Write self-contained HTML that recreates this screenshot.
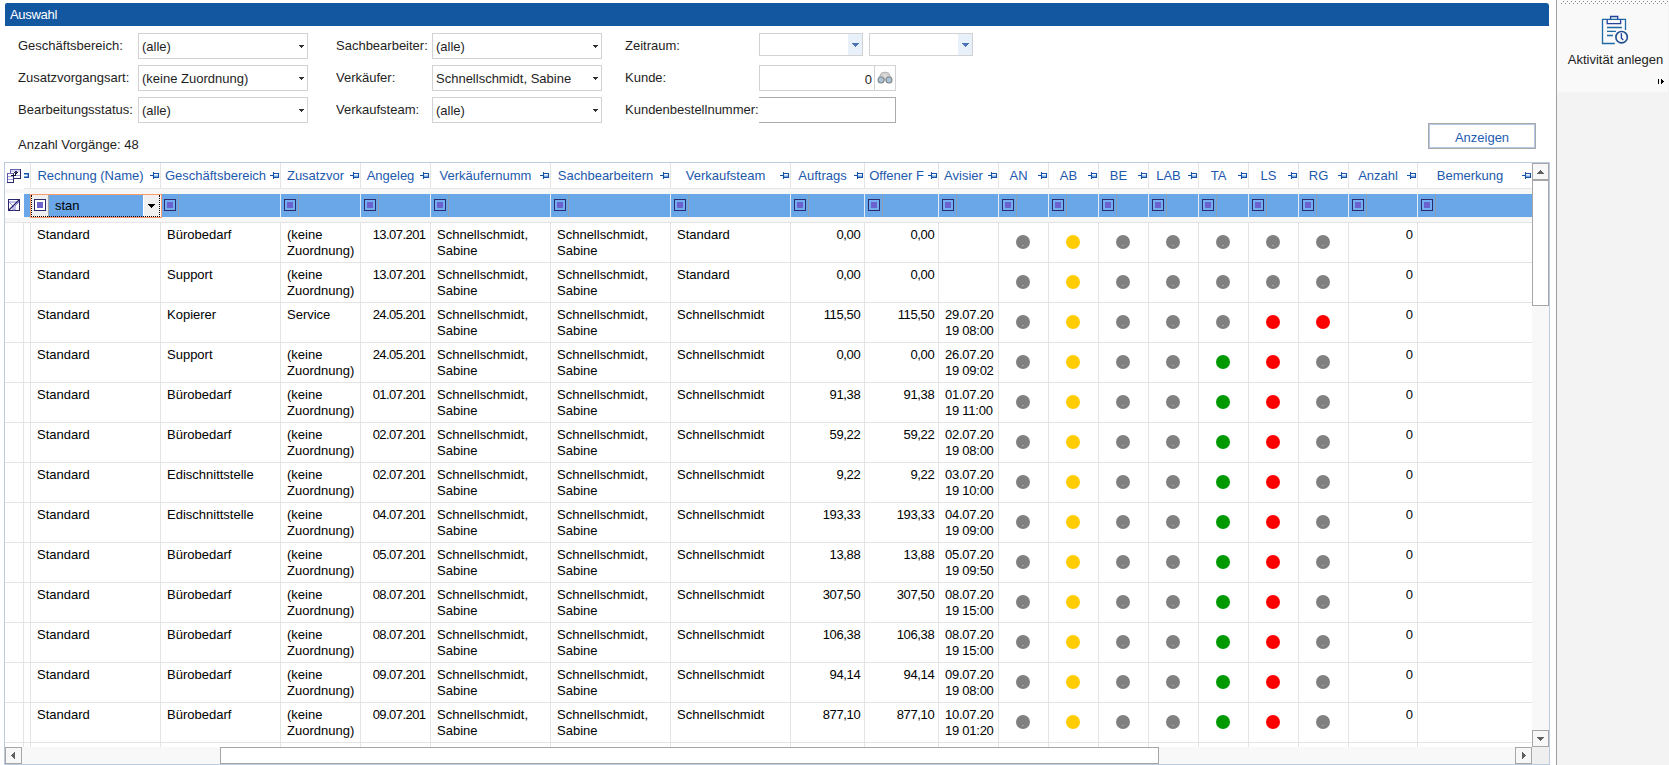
<!DOCTYPE html><html><head><meta charset="utf-8"><style>
*{margin:0;padding:0;box-sizing:border-box}
html,body{width:1669px;height:765px;overflow:hidden;background:#fff;font-family:"Liberation Sans",sans-serif;font-size:13px}
.a{position:absolute}
.t{position:absolute;white-space:nowrap;line-height:16px;font-size:13px}
.cb{position:absolute;border:1px solid #d2d2d2;background:#fff}
.arr{position:absolute;width:0;height:0;border-left:2.5px solid transparent;border-right:2.5px solid transparent;border-top:3px solid #333}
.hl{position:absolute;background:#e4e4e4}
.dot{position:absolute;width:14px;height:14px;border-radius:50%}
.fi{position:absolute;width:12px;height:12px;border:1px solid #2b2a6b;background:#72aef0}
.fi i{position:absolute;left:2px;top:2px;width:6px;height:6px;background:#6b62cf}
.sep{position:absolute;width:1px;background:#8e9fb3}
.pin{position:absolute;width:10px;height:8px}
.sbtn{position:absolute;border:1px solid #a6a6a6;background:#f7f7f7}
</style></head><body>

<div class="a" style="left:5px;top:3px;width:1544px;height:23px;background:#1357a0;border-top-right-radius:3px;border-top-left-radius:2px"></div>
<div class="t" style="left:10px;top:7px;color:#fff;letter-spacing:-0.3px">Auswahl</div>
<div class="t" style="left:18px;top:38px;color:#1e1e1e;">Geschäftsbereich:</div>
<div class="t" style="left:18px;top:70px;color:#1e1e1e;">Zusatzvorgangsart:</div>
<div class="t" style="left:18px;top:102px;color:#1e1e1e;">Bearbeitungsstatus:</div>
<div class="t" style="left:336px;top:38px;color:#1e1e1e;">Sachbearbeiter:</div>
<div class="t" style="left:336px;top:70px;color:#1e1e1e;">Verkäufer:</div>
<div class="t" style="left:336px;top:102px;color:#1e1e1e;">Verkaufsteam:</div>
<div class="t" style="left:625px;top:38px;color:#1e1e1e;">Zeitraum:</div>
<div class="t" style="left:625px;top:70px;color:#1e1e1e;">Kunde:</div>
<div class="t" style="left:625px;top:102px;color:#1e1e1e;">Kundenbestellnummer:</div>
<div class="t" style="left:18px;top:137px;color:#1e1e1e;">Anzahl Vorgänge: 48</div>
<div class="cb" style="left:138px;top:33px;width:170px;height:26px"></div>
<div class="t" style="left:142px;top:39px;color:#1e1e1e;">(alle)</div>
<div class="a" style="left:299px;top:45px;width:5px;height:1px;background:#333"></div><div class="a" style="left:300px;top:46px;width:3px;height:1px;background:#333"></div><div class="a" style="left:301px;top:47px;width:1px;height:1px;background:#333"></div>
<div class="cb" style="left:138px;top:65px;width:170px;height:26px"></div>
<div class="t" style="left:142px;top:71px;color:#1e1e1e;">(keine Zuordnung)</div>
<div class="a" style="left:299px;top:77px;width:5px;height:1px;background:#333"></div><div class="a" style="left:300px;top:78px;width:3px;height:1px;background:#333"></div><div class="a" style="left:301px;top:79px;width:1px;height:1px;background:#333"></div>
<div class="cb" style="left:138px;top:97px;width:170px;height:26px"></div>
<div class="t" style="left:142px;top:103px;color:#1e1e1e;">(alle)</div>
<div class="a" style="left:299px;top:109px;width:5px;height:1px;background:#333"></div><div class="a" style="left:300px;top:110px;width:3px;height:1px;background:#333"></div><div class="a" style="left:301px;top:111px;width:1px;height:1px;background:#333"></div>
<div class="cb" style="left:432px;top:33px;width:170px;height:26px"></div>
<div class="t" style="left:436px;top:39px;color:#1e1e1e;">(alle)</div>
<div class="a" style="left:593px;top:45px;width:5px;height:1px;background:#333"></div><div class="a" style="left:594px;top:46px;width:3px;height:1px;background:#333"></div><div class="a" style="left:595px;top:47px;width:1px;height:1px;background:#333"></div>
<div class="cb" style="left:432px;top:65px;width:170px;height:26px"></div>
<div class="t" style="left:436px;top:71px;color:#1e1e1e;">Schnellschmidt, Sabine</div>
<div class="a" style="left:593px;top:77px;width:5px;height:1px;background:#333"></div><div class="a" style="left:594px;top:78px;width:3px;height:1px;background:#333"></div><div class="a" style="left:595px;top:79px;width:1px;height:1px;background:#333"></div>
<div class="cb" style="left:432px;top:97px;width:170px;height:26px"></div>
<div class="t" style="left:436px;top:103px;color:#1e1e1e;">(alle)</div>
<div class="a" style="left:593px;top:109px;width:5px;height:1px;background:#333"></div><div class="a" style="left:594px;top:110px;width:3px;height:1px;background:#333"></div><div class="a" style="left:595px;top:111px;width:1px;height:1px;background:#333"></div>
<div class="cb" style="left:759px;top:33px;width:104px;height:23px"></div>
<div class="a" style="left:848px;top:34px;width:14px;height:21px;background:#e8f0fa"></div>
<div class="a" style="left:852px;top:43px;width:7px;height:1px;background:#4a74b4"></div><div class="a" style="left:853px;top:44px;width:5px;height:1px;background:#4a74b4"></div><div class="a" style="left:854px;top:45px;width:3px;height:1px;background:#4a74b4"></div><div class="a" style="left:855px;top:46px;width:1px;height:1px;background:#4a74b4"></div>
<div class="cb" style="left:869px;top:33px;width:104px;height:23px"></div>
<div class="a" style="left:958px;top:34px;width:14px;height:21px;background:#e8f0fa"></div>
<div class="a" style="left:962px;top:43px;width:7px;height:1px;background:#4a74b4"></div><div class="a" style="left:963px;top:44px;width:5px;height:1px;background:#4a74b4"></div><div class="a" style="left:964px;top:45px;width:3px;height:1px;background:#4a74b4"></div><div class="a" style="left:965px;top:46px;width:1px;height:1px;background:#4a74b4"></div>
<div class="cb" style="left:759px;top:65px;width:137px;height:26px"></div>
<div class="a" style="left:874px;top:66px;width:1px;height:24px;background:#d2d2d2"></div>
<div class="t" style="left:759px;width:113px;text-align:right;top:72px;color:#1e1e1e">0</div>
<svg class="a" style="left:877px;top:70px" width="16" height="14" viewBox="0 0 16 14">
<path d="M1.2 10 L4 3.5 Q5 2.3 6.5 2.6 Q8 1.6 9.5 2.6 Q11 2.3 12 3.5 L14.8 10 Z" fill="#cfcfcf" stroke="#a3a3a3" stroke-width="0.8"/>
<path d="M7 4 V8 M9 4 V8" stroke="#e8e8e8" stroke-width="0.8"/>
<circle cx="4.1" cy="10" r="3" fill="#a9c3da" stroke="#858585" stroke-width="1.1"/>
<circle cx="12" cy="10" r="3" fill="#a9c3da" stroke="#858585" stroke-width="1.1"/>
</svg>
<div class="a" style="left:759px;top:97px;width:137px;height:26px;border:1px solid #ababab;border-left:none;background:#fff"></div>
<div class="a" style="left:1428px;top:123px;width:108px;height:26px;border:1px solid #a8a8a8;background:#fff"><div class="a" style="left:0;top:0;right:0;bottom:0;border:1px solid #b4cbe8"></div></div>
<div class="t" style="left:1428px;width:108px;text-align:center;top:130px;color:#1e5cb3">Anzeigen</div>
<div class="a" style="left:1556px;top:0;width:1px;height:765px;background:#a0a0a0"></div>
<div class="a" style="left:1557px;top:0;width:112px;height:765px;background:#f3f3f3"></div>
<div class="a" style="left:1557px;top:0;width:111px;height:92px;background:#f9f9f9"></div>
<div class="a" style="left:1563px;top:1px;width:1px;height:1px;background:#8a8a8a"></div><div class="a" style="left:1561px;top:3px;width:1px;height:1px;background:#8a8a8a"></div><div class="a" style="left:1567px;top:1px;width:1px;height:1px;background:#8a8a8a"></div><div class="a" style="left:1565px;top:3px;width:1px;height:1px;background:#8a8a8a"></div><div class="a" style="left:1571px;top:1px;width:1px;height:1px;background:#8a8a8a"></div><div class="a" style="left:1569px;top:3px;width:1px;height:1px;background:#8a8a8a"></div><div class="a" style="left:1575px;top:1px;width:1px;height:1px;background:#8a8a8a"></div><div class="a" style="left:1573px;top:3px;width:1px;height:1px;background:#8a8a8a"></div><div class="a" style="left:1579px;top:1px;width:1px;height:1px;background:#8a8a8a"></div><div class="a" style="left:1577px;top:3px;width:1px;height:1px;background:#8a8a8a"></div><div class="a" style="left:1583px;top:1px;width:1px;height:1px;background:#8a8a8a"></div><div class="a" style="left:1581px;top:3px;width:1px;height:1px;background:#8a8a8a"></div><div class="a" style="left:1587px;top:1px;width:1px;height:1px;background:#8a8a8a"></div><div class="a" style="left:1585px;top:3px;width:1px;height:1px;background:#8a8a8a"></div><div class="a" style="left:1591px;top:1px;width:1px;height:1px;background:#8a8a8a"></div><div class="a" style="left:1589px;top:3px;width:1px;height:1px;background:#8a8a8a"></div><div class="a" style="left:1595px;top:1px;width:1px;height:1px;background:#8a8a8a"></div><div class="a" style="left:1593px;top:3px;width:1px;height:1px;background:#8a8a8a"></div><div class="a" style="left:1599px;top:1px;width:1px;height:1px;background:#8a8a8a"></div><div class="a" style="left:1597px;top:3px;width:1px;height:1px;background:#8a8a8a"></div><div class="a" style="left:1603px;top:1px;width:1px;height:1px;background:#8a8a8a"></div><div class="a" style="left:1601px;top:3px;width:1px;height:1px;background:#8a8a8a"></div><div class="a" style="left:1607px;top:1px;width:1px;height:1px;background:#8a8a8a"></div><div class="a" style="left:1605px;top:3px;width:1px;height:1px;background:#8a8a8a"></div><div class="a" style="left:1611px;top:1px;width:1px;height:1px;background:#8a8a8a"></div><div class="a" style="left:1609px;top:3px;width:1px;height:1px;background:#8a8a8a"></div><div class="a" style="left:1615px;top:1px;width:1px;height:1px;background:#8a8a8a"></div><div class="a" style="left:1613px;top:3px;width:1px;height:1px;background:#8a8a8a"></div><div class="a" style="left:1619px;top:1px;width:1px;height:1px;background:#8a8a8a"></div><div class="a" style="left:1617px;top:3px;width:1px;height:1px;background:#8a8a8a"></div><div class="a" style="left:1623px;top:1px;width:1px;height:1px;background:#8a8a8a"></div><div class="a" style="left:1621px;top:3px;width:1px;height:1px;background:#8a8a8a"></div><div class="a" style="left:1627px;top:1px;width:1px;height:1px;background:#8a8a8a"></div><div class="a" style="left:1625px;top:3px;width:1px;height:1px;background:#8a8a8a"></div><div class="a" style="left:1631px;top:1px;width:1px;height:1px;background:#8a8a8a"></div><div class="a" style="left:1629px;top:3px;width:1px;height:1px;background:#8a8a8a"></div><div class="a" style="left:1635px;top:1px;width:1px;height:1px;background:#8a8a8a"></div><div class="a" style="left:1633px;top:3px;width:1px;height:1px;background:#8a8a8a"></div><div class="a" style="left:1639px;top:1px;width:1px;height:1px;background:#8a8a8a"></div><div class="a" style="left:1637px;top:3px;width:1px;height:1px;background:#8a8a8a"></div><div class="a" style="left:1643px;top:1px;width:1px;height:1px;background:#8a8a8a"></div><div class="a" style="left:1641px;top:3px;width:1px;height:1px;background:#8a8a8a"></div><div class="a" style="left:1647px;top:1px;width:1px;height:1px;background:#8a8a8a"></div><div class="a" style="left:1645px;top:3px;width:1px;height:1px;background:#8a8a8a"></div><div class="a" style="left:1651px;top:1px;width:1px;height:1px;background:#8a8a8a"></div><div class="a" style="left:1649px;top:3px;width:1px;height:1px;background:#8a8a8a"></div><div class="a" style="left:1655px;top:1px;width:1px;height:1px;background:#8a8a8a"></div><div class="a" style="left:1653px;top:3px;width:1px;height:1px;background:#8a8a8a"></div><div class="a" style="left:1659px;top:1px;width:1px;height:1px;background:#8a8a8a"></div><div class="a" style="left:1657px;top:3px;width:1px;height:1px;background:#8a8a8a"></div><div class="a" style="left:1663px;top:1px;width:1px;height:1px;background:#8a8a8a"></div><div class="a" style="left:1661px;top:3px;width:1px;height:1px;background:#8a8a8a"></div><div class="a" style="left:1667px;top:1px;width:1px;height:1px;background:#8a8a8a"></div><div class="a" style="left:1665px;top:3px;width:1px;height:1px;background:#8a8a8a"></div>
<svg class="a" style="left:1596px;top:10px" width="40" height="40" viewBox="0 0 40 40">
<g fill="none" stroke-width="1.3">
<path d="M18.8 33.5 H6.5 V9.4 H29.5 V19.9" stroke="#1f6aa6"/>
<path d="M11.2 9.4 V13.6 H24.6 V9.4" stroke="#21449a"/>
<path d="M14.6 9.4 V6.5 H21.7 V9.4" stroke="#21449a"/>
<path d="M11 17.5 H25.9 M11 21.4 H19.9 M11 25.5 H17" stroke="#1f6aa6"/>
<circle cx="25.6" cy="27.2" r="5.7" stroke="#1d4d92" stroke-width="1.6"/>
<path d="M25.4 23.2 V28.3 L27.3 30" stroke="#21449a" stroke-width="1.4"/>
</g></svg>
<div class="t" style="left:1560px;width:111px;text-align:center;top:52px;color:#1e1e1e">Aktivität anlegen</div>
<div class="a" style="left:1658px;top:79px;width:1px;height:5px;background:#000"></div>
<div class="a" style="left:1661px;top:79px;width:1px;height:5px;background:#000"></div><div class="a" style="left:1662px;top:80px;width:1px;height:3px;background:#000"></div><div class="a" style="left:1663px;top:81px;width:1px;height:1px;background:#000"></div>
<div class="a" style="left:4px;top:162px;width:1546px;height:603px;border:1px solid #bccbdd;background:#fff"></div>
<div class="hl" style="left:24px;top:188px;width:1508px;height:1px"></div>
<div class="a" style="left:5px;top:189px;width:1527px;height:5px;background:#f7f7f7"></div>
<div class="a" style="left:5px;top:217px;width:1527px;height:5px;background:#f7f7f7"></div>
<div class="hl" style="left:30px;top:163px;width:1px;height:25px"></div>
<div class="hl" style="left:160px;top:163px;width:1px;height:25px"></div>
<div class="hl" style="left:280px;top:163px;width:1px;height:25px"></div>
<div class="hl" style="left:360px;top:163px;width:1px;height:25px"></div>
<div class="hl" style="left:430px;top:163px;width:1px;height:25px"></div>
<div class="hl" style="left:550px;top:163px;width:1px;height:25px"></div>
<div class="hl" style="left:670px;top:163px;width:1px;height:25px"></div>
<div class="hl" style="left:790px;top:163px;width:1px;height:25px"></div>
<div class="hl" style="left:864px;top:163px;width:1px;height:25px"></div>
<div class="hl" style="left:938px;top:163px;width:1px;height:25px"></div>
<div class="hl" style="left:998px;top:163px;width:1px;height:25px"></div>
<div class="hl" style="left:1048px;top:163px;width:1px;height:25px"></div>
<div class="hl" style="left:1098px;top:163px;width:1px;height:25px"></div>
<div class="hl" style="left:1148px;top:163px;width:1px;height:25px"></div>
<div class="hl" style="left:1198px;top:163px;width:1px;height:25px"></div>
<div class="hl" style="left:1248px;top:163px;width:1px;height:25px"></div>
<div class="hl" style="left:1298px;top:163px;width:1px;height:25px"></div>
<div class="hl" style="left:1348px;top:163px;width:1px;height:25px"></div>
<div class="hl" style="left:1417px;top:163px;width:1px;height:25px"></div>
<div class="t" style="left:31px;width:119px;text-align:center;top:168px;color:#1c59ad;overflow:hidden">Rechnung (Name)</div>
<svg class="a" style="left:150px;top:172px" width="10" height="8" viewBox="0 0 10 8"><rect x="4" y="3.5" width="4.5" height="2" fill="#7fa8e0"/><path d="M0 3.5 H4 M3.5 0 V7 M4 1.5 H8.5 V5.5 H4" fill="none" stroke="#1552a8" stroke-width="1.1"/></svg>
<div class="t" style="left:161px;width:109px;text-align:center;top:168px;color:#1c59ad;overflow:hidden">Geschäftsbereich</div>
<svg class="a" style="left:270px;top:172px" width="10" height="8" viewBox="0 0 10 8"><rect x="4" y="3.5" width="4.5" height="2" fill="#7fa8e0"/><path d="M0 3.5 H4 M3.5 0 V7 M4 1.5 H8.5 V5.5 H4" fill="none" stroke="#1552a8" stroke-width="1.1"/></svg>
<div class="t" style="left:281px;width:69px;text-align:center;top:168px;color:#1c59ad;overflow:hidden">Zusatzvor</div>
<svg class="a" style="left:350px;top:172px" width="10" height="8" viewBox="0 0 10 8"><rect x="4" y="3.5" width="4.5" height="2" fill="#7fa8e0"/><path d="M0 3.5 H4 M3.5 0 V7 M4 1.5 H8.5 V5.5 H4" fill="none" stroke="#1552a8" stroke-width="1.1"/></svg>
<div class="t" style="left:361px;width:59px;text-align:center;top:168px;color:#1c59ad;overflow:hidden">Angeleg</div>
<svg class="a" style="left:420px;top:172px" width="10" height="8" viewBox="0 0 10 8"><rect x="4" y="3.5" width="4.5" height="2" fill="#7fa8e0"/><path d="M0 3.5 H4 M3.5 0 V7 M4 1.5 H8.5 V5.5 H4" fill="none" stroke="#1552a8" stroke-width="1.1"/></svg>
<div class="t" style="left:431px;width:109px;text-align:center;top:168px;color:#1c59ad;overflow:hidden">Verkäufernumm</div>
<svg class="a" style="left:540px;top:172px" width="10" height="8" viewBox="0 0 10 8"><rect x="4" y="3.5" width="4.5" height="2" fill="#7fa8e0"/><path d="M0 3.5 H4 M3.5 0 V7 M4 1.5 H8.5 V5.5 H4" fill="none" stroke="#1552a8" stroke-width="1.1"/></svg>
<div class="t" style="left:551px;width:109px;text-align:center;top:168px;color:#1c59ad;overflow:hidden">Sachbearbeitern</div>
<svg class="a" style="left:660px;top:172px" width="10" height="8" viewBox="0 0 10 8"><rect x="4" y="3.5" width="4.5" height="2" fill="#7fa8e0"/><path d="M0 3.5 H4 M3.5 0 V7 M4 1.5 H8.5 V5.5 H4" fill="none" stroke="#1552a8" stroke-width="1.1"/></svg>
<div class="t" style="left:671px;width:109px;text-align:center;top:168px;color:#1c59ad;overflow:hidden">Verkaufsteam</div>
<svg class="a" style="left:780px;top:172px" width="10" height="8" viewBox="0 0 10 8"><rect x="4" y="3.5" width="4.5" height="2" fill="#7fa8e0"/><path d="M0 3.5 H4 M3.5 0 V7 M4 1.5 H8.5 V5.5 H4" fill="none" stroke="#1552a8" stroke-width="1.1"/></svg>
<div class="t" style="left:791px;width:63px;text-align:center;top:168px;color:#1c59ad;overflow:hidden">Auftrags</div>
<svg class="a" style="left:854px;top:172px" width="10" height="8" viewBox="0 0 10 8"><rect x="4" y="3.5" width="4.5" height="2" fill="#7fa8e0"/><path d="M0 3.5 H4 M3.5 0 V7 M4 1.5 H8.5 V5.5 H4" fill="none" stroke="#1552a8" stroke-width="1.1"/></svg>
<div class="t" style="left:865px;width:63px;text-align:center;top:168px;color:#1c59ad;overflow:hidden">Offener F</div>
<svg class="a" style="left:928px;top:172px" width="10" height="8" viewBox="0 0 10 8"><rect x="4" y="3.5" width="4.5" height="2" fill="#7fa8e0"/><path d="M0 3.5 H4 M3.5 0 V7 M4 1.5 H8.5 V5.5 H4" fill="none" stroke="#1552a8" stroke-width="1.1"/></svg>
<div class="t" style="left:939px;width:49px;text-align:center;top:168px;color:#1c59ad;overflow:hidden">Avisier</div>
<svg class="a" style="left:988px;top:172px" width="10" height="8" viewBox="0 0 10 8"><rect x="4" y="3.5" width="4.5" height="2" fill="#7fa8e0"/><path d="M0 3.5 H4 M3.5 0 V7 M4 1.5 H8.5 V5.5 H4" fill="none" stroke="#1552a8" stroke-width="1.1"/></svg>
<div class="t" style="left:999px;width:39px;text-align:center;top:168px;color:#1c59ad;overflow:hidden">AN</div>
<svg class="a" style="left:1038px;top:172px" width="10" height="8" viewBox="0 0 10 8"><rect x="4" y="3.5" width="4.5" height="2" fill="#7fa8e0"/><path d="M0 3.5 H4 M3.5 0 V7 M4 1.5 H8.5 V5.5 H4" fill="none" stroke="#1552a8" stroke-width="1.1"/></svg>
<div class="t" style="left:1049px;width:39px;text-align:center;top:168px;color:#1c59ad;overflow:hidden">AB</div>
<svg class="a" style="left:1088px;top:172px" width="10" height="8" viewBox="0 0 10 8"><rect x="4" y="3.5" width="4.5" height="2" fill="#7fa8e0"/><path d="M0 3.5 H4 M3.5 0 V7 M4 1.5 H8.5 V5.5 H4" fill="none" stroke="#1552a8" stroke-width="1.1"/></svg>
<div class="t" style="left:1099px;width:39px;text-align:center;top:168px;color:#1c59ad;overflow:hidden">BE</div>
<svg class="a" style="left:1138px;top:172px" width="10" height="8" viewBox="0 0 10 8"><rect x="4" y="3.5" width="4.5" height="2" fill="#7fa8e0"/><path d="M0 3.5 H4 M3.5 0 V7 M4 1.5 H8.5 V5.5 H4" fill="none" stroke="#1552a8" stroke-width="1.1"/></svg>
<div class="t" style="left:1149px;width:39px;text-align:center;top:168px;color:#1c59ad;overflow:hidden">LAB</div>
<svg class="a" style="left:1188px;top:172px" width="10" height="8" viewBox="0 0 10 8"><rect x="4" y="3.5" width="4.5" height="2" fill="#7fa8e0"/><path d="M0 3.5 H4 M3.5 0 V7 M4 1.5 H8.5 V5.5 H4" fill="none" stroke="#1552a8" stroke-width="1.1"/></svg>
<div class="t" style="left:1199px;width:39px;text-align:center;top:168px;color:#1c59ad;overflow:hidden">TA</div>
<svg class="a" style="left:1238px;top:172px" width="10" height="8" viewBox="0 0 10 8"><rect x="4" y="3.5" width="4.5" height="2" fill="#7fa8e0"/><path d="M0 3.5 H4 M3.5 0 V7 M4 1.5 H8.5 V5.5 H4" fill="none" stroke="#1552a8" stroke-width="1.1"/></svg>
<div class="t" style="left:1249px;width:39px;text-align:center;top:168px;color:#1c59ad;overflow:hidden">LS</div>
<svg class="a" style="left:1288px;top:172px" width="10" height="8" viewBox="0 0 10 8"><rect x="4" y="3.5" width="4.5" height="2" fill="#7fa8e0"/><path d="M0 3.5 H4 M3.5 0 V7 M4 1.5 H8.5 V5.5 H4" fill="none" stroke="#1552a8" stroke-width="1.1"/></svg>
<div class="t" style="left:1299px;width:39px;text-align:center;top:168px;color:#1c59ad;overflow:hidden">RG</div>
<svg class="a" style="left:1338px;top:172px" width="10" height="8" viewBox="0 0 10 8"><rect x="4" y="3.5" width="4.5" height="2" fill="#7fa8e0"/><path d="M0 3.5 H4 M3.5 0 V7 M4 1.5 H8.5 V5.5 H4" fill="none" stroke="#1552a8" stroke-width="1.1"/></svg>
<div class="t" style="left:1349px;width:58px;text-align:center;top:168px;color:#1c59ad;overflow:hidden">Anzahl</div>
<svg class="a" style="left:1407px;top:172px" width="10" height="8" viewBox="0 0 10 8"><rect x="4" y="3.5" width="4.5" height="2" fill="#7fa8e0"/><path d="M0 3.5 H4 M3.5 0 V7 M4 1.5 H8.5 V5.5 H4" fill="none" stroke="#1552a8" stroke-width="1.1"/></svg>
<div class="t" style="left:1418px;width:104px;text-align:center;top:168px;color:#1c59ad;overflow:hidden">Bemerkung</div>
<svg class="a" style="left:1522px;top:172px" width="10" height="8" viewBox="0 0 10 8"><rect x="4" y="3.5" width="4.5" height="2" fill="#7fa8e0"/><path d="M0 3.5 H4 M3.5 0 V7 M4 1.5 H8.5 V5.5 H4" fill="none" stroke="#1552a8" stroke-width="1.1"/></svg>
<svg class="a" style="left:5px;top:166px" width="20" height="20" viewBox="0 0 20 20" shape-rendering="crispEdges"><rect x="5" y="3" width="11" height="10" fill="#fff"/><rect x="6" y="4" width="9" height="2" fill="#d6d4f0"/><rect x="6" y="9" width="9" height="1" fill="#a29edb"/><rect x="5" y="3" width="11" height="1" fill="#6763b0"/><rect x="5" y="3" width="1" height="10" fill="#6763b0"/><rect x="15" y="3" width="1" height="10" fill="#2b2a6b"/><rect x="5" y="12" width="11" height="1" fill="#2b2a6b"/><rect x="2" y="7" width="7" height="10" fill="#fff"/><rect x="3" y="10" width="5" height="1" fill="#a29edb"/><rect x="3" y="13" width="5" height="1" fill="#a29edb"/><rect x="2" y="7" width="7" height="1" fill="#6d69b8"/><rect x="2" y="7" width="1" height="10" fill="#5d59a8"/><rect x="8" y="7" width="1" height="10" fill="#2b2a6b"/><rect x="2" y="16" width="7" height="1" fill="#2b2a6b"/><path d="M6 9.5 H9.5 Q11 9.5 11 7 V5.5" fill="none" stroke="#151530" stroke-width="1.2"/><path d="M8.6 6.6 L11 4 L13.4 6.6 Z" fill="#2b2a6b"/></svg>
<svg class="a" style="left:23px;top:172px" width="8" height="8" viewBox="0 0 8 8"><path d="M1 1.7 H5.3 V5.3 H1" fill="none" stroke="#1552a8" stroke-width="1.4"/></svg>
<div class="a" style="left:5px;top:193px;width:19px;height:25px;background:#fff"></div>
<div class="a" style="left:24px;top:194px;width:1508px;height:23px;background:#6aa7e9"></div>
<svg class="a" style="left:8px;top:199px" width="12" height="12" viewBox="0 0 12 12">
<rect x="0.5" y="0.5" width="11" height="11" fill="#fff" stroke="#28276a"/>
<path d="M1 3 H11 L7 7 V11 H5 V7 Z" fill="none" stroke="#7d77d8" stroke-width="0.9"/>
<path d="M1 11 L11 1" stroke="#28276a" stroke-width="1.3"/>
</svg>
<div class="a" style="left:160px;top:194px;width:1px;height:23px;background:#e6ecf3"></div>
<div class="fi" style="left:164px;top:199px"><i></i></div>
<div class="sep" style="left:178px;top:194px;height:23px"></div>
<div class="a" style="left:280px;top:194px;width:1px;height:23px;background:#e6ecf3"></div>
<div class="fi" style="left:284px;top:199px"><i></i></div>
<div class="sep" style="left:298px;top:194px;height:23px"></div>
<div class="a" style="left:360px;top:194px;width:1px;height:23px;background:#e6ecf3"></div>
<div class="fi" style="left:364px;top:199px"><i></i></div>
<div class="sep" style="left:378px;top:194px;height:23px"></div>
<div class="a" style="left:430px;top:194px;width:1px;height:23px;background:#e6ecf3"></div>
<div class="fi" style="left:434px;top:199px"><i></i></div>
<div class="sep" style="left:448px;top:194px;height:23px"></div>
<div class="a" style="left:550px;top:194px;width:1px;height:23px;background:#e6ecf3"></div>
<div class="fi" style="left:554px;top:199px"><i></i></div>
<div class="sep" style="left:568px;top:194px;height:23px"></div>
<div class="a" style="left:670px;top:194px;width:1px;height:23px;background:#e6ecf3"></div>
<div class="fi" style="left:674px;top:199px"><i></i></div>
<div class="sep" style="left:688px;top:194px;height:23px"></div>
<div class="a" style="left:790px;top:194px;width:1px;height:23px;background:#e6ecf3"></div>
<div class="fi" style="left:794px;top:199px"><i></i></div>
<div class="sep" style="left:808px;top:194px;height:23px"></div>
<div class="a" style="left:864px;top:194px;width:1px;height:23px;background:#e6ecf3"></div>
<div class="fi" style="left:868px;top:199px"><i></i></div>
<div class="sep" style="left:882px;top:194px;height:23px"></div>
<div class="a" style="left:938px;top:194px;width:1px;height:23px;background:#e6ecf3"></div>
<div class="fi" style="left:942px;top:199px"><i></i></div>
<div class="sep" style="left:956px;top:194px;height:23px"></div>
<div class="a" style="left:998px;top:194px;width:1px;height:23px;background:#e6ecf3"></div>
<div class="fi" style="left:1002px;top:199px"><i></i></div>
<div class="sep" style="left:1016px;top:194px;height:23px"></div>
<div class="a" style="left:1048px;top:194px;width:1px;height:23px;background:#e6ecf3"></div>
<div class="fi" style="left:1052px;top:199px"><i></i></div>
<div class="sep" style="left:1066px;top:194px;height:23px"></div>
<div class="a" style="left:1098px;top:194px;width:1px;height:23px;background:#e6ecf3"></div>
<div class="fi" style="left:1102px;top:199px"><i></i></div>
<div class="sep" style="left:1116px;top:194px;height:23px"></div>
<div class="a" style="left:1148px;top:194px;width:1px;height:23px;background:#e6ecf3"></div>
<div class="fi" style="left:1152px;top:199px"><i></i></div>
<div class="sep" style="left:1166px;top:194px;height:23px"></div>
<div class="a" style="left:1198px;top:194px;width:1px;height:23px;background:#e6ecf3"></div>
<div class="fi" style="left:1202px;top:199px"><i></i></div>
<div class="sep" style="left:1216px;top:194px;height:23px"></div>
<div class="a" style="left:1248px;top:194px;width:1px;height:23px;background:#e6ecf3"></div>
<div class="fi" style="left:1252px;top:199px"><i></i></div>
<div class="sep" style="left:1266px;top:194px;height:23px"></div>
<div class="a" style="left:1298px;top:194px;width:1px;height:23px;background:#e6ecf3"></div>
<div class="fi" style="left:1302px;top:199px"><i></i></div>
<div class="sep" style="left:1316px;top:194px;height:23px"></div>
<div class="a" style="left:1348px;top:194px;width:1px;height:23px;background:#e6ecf3"></div>
<div class="fi" style="left:1352px;top:199px"><i></i></div>
<div class="sep" style="left:1366px;top:194px;height:23px"></div>
<div class="a" style="left:1417px;top:194px;width:1px;height:23px;background:#e6ecf3"></div>
<div class="fi" style="left:1421px;top:199px"><i></i></div>
<div class="sep" style="left:1435px;top:194px;height:23px"></div>
<div class="a" style="left:30px;top:194px;width:132px;height:24px;border:1px solid #ff9a6a"></div>
<div class="a" style="left:31px;top:195px;width:18px;height:22px;background:#efefef"></div>
<div class="a" style="left:48px;top:195px;width:1px;height:22px;background:#a6a6a6"></div>
<div class="a" style="left:143px;top:195px;width:17px;height:22px;background:#f0f0f0;border-left:1px solid #fff"></div>
<div class="a" style="left:160px;top:195px;width:1px;height:22px;background:#fff"></div>
<div class="a" style="left:31px;top:195px;width:129px;height:22px;border:1px dotted #000;border-top:none"></div>
<div class="fi" style="left:34px;top:199px;background:#fff"><i></i></div>
<div class="a" style="left:148px;top:204px;width:7px;height:1px;background:#000"></div><div class="a" style="left:149px;top:205px;width:5px;height:1px;background:#000"></div><div class="a" style="left:150px;top:206px;width:3px;height:1px;background:#000"></div><div class="a" style="left:151px;top:207px;width:1px;height:1px;background:#000"></div>
<div class="t" style="left:55px;top:198px;color:#000">stan</div>
<div class="hl" style="left:5px;top:222px;width:1527px;height:1px"></div>
<div class="hl" style="left:5px;top:262px;width:1527px;height:1px"></div>
<div class="hl" style="left:5px;top:302px;width:1527px;height:1px"></div>
<div class="hl" style="left:5px;top:342px;width:1527px;height:1px"></div>
<div class="hl" style="left:5px;top:382px;width:1527px;height:1px"></div>
<div class="hl" style="left:5px;top:422px;width:1527px;height:1px"></div>
<div class="hl" style="left:5px;top:462px;width:1527px;height:1px"></div>
<div class="hl" style="left:5px;top:502px;width:1527px;height:1px"></div>
<div class="hl" style="left:5px;top:542px;width:1527px;height:1px"></div>
<div class="hl" style="left:5px;top:582px;width:1527px;height:1px"></div>
<div class="hl" style="left:5px;top:622px;width:1527px;height:1px"></div>
<div class="hl" style="left:5px;top:662px;width:1527px;height:1px"></div>
<div class="hl" style="left:5px;top:702px;width:1527px;height:1px"></div>
<div class="hl" style="left:5px;top:742px;width:1527px;height:1px"></div>
<div class="hl" style="left:23px;top:222px;width:1px;height:525px"></div>
<div class="hl" style="left:30px;top:222px;width:1px;height:525px"></div>
<div class="hl" style="left:160px;top:222px;width:1px;height:525px"></div>
<div class="hl" style="left:280px;top:222px;width:1px;height:525px"></div>
<div class="hl" style="left:360px;top:222px;width:1px;height:525px"></div>
<div class="hl" style="left:430px;top:222px;width:1px;height:525px"></div>
<div class="hl" style="left:550px;top:222px;width:1px;height:525px"></div>
<div class="hl" style="left:670px;top:222px;width:1px;height:525px"></div>
<div class="hl" style="left:790px;top:222px;width:1px;height:525px"></div>
<div class="hl" style="left:864px;top:222px;width:1px;height:525px"></div>
<div class="hl" style="left:938px;top:222px;width:1px;height:525px"></div>
<div class="hl" style="left:998px;top:222px;width:1px;height:525px"></div>
<div class="hl" style="left:1048px;top:222px;width:1px;height:525px"></div>
<div class="hl" style="left:1098px;top:222px;width:1px;height:525px"></div>
<div class="hl" style="left:1148px;top:222px;width:1px;height:525px"></div>
<div class="hl" style="left:1198px;top:222px;width:1px;height:525px"></div>
<div class="hl" style="left:1248px;top:222px;width:1px;height:525px"></div>
<div class="hl" style="left:1298px;top:222px;width:1px;height:525px"></div>
<div class="hl" style="left:1348px;top:222px;width:1px;height:525px"></div>
<div class="hl" style="left:1417px;top:222px;width:1px;height:525px"></div>
<div class="t" style="left:37px;top:227px;color:#000;">Standard</div>
<div class="t" style="left:167px;top:227px;color:#000;">Bürobedarf</div>
<div class="t" style="left:287px;top:227px;color:#000;">(keine</div>
<div class="t" style="left:287px;top:243px;color:#000;">Zuordnung)</div>
<div class="t" style="left:360px;width:65.55px;text-align:right;top:227px;color:#000;letter-spacing:-0.55px">13.07.201</div>
<div class="t" style="left:437px;top:227px;color:#000;">Schnellschmidt,</div>
<div class="t" style="left:437px;top:243px;color:#000;">Sabine</div>
<div class="t" style="left:557px;top:227px;color:#000;">Schnellschmidt,</div>
<div class="t" style="left:557px;top:243px;color:#000;">Sabine</div>
<div class="t" style="left:677px;top:227px;color:#000;">Standard</div>
<div class="t" style="left:790px;width:70.35px;text-align:right;top:227px;color:#000;letter-spacing:-0.35px">0,00</div>
<div class="t" style="left:864px;width:70.35px;text-align:right;top:227px;color:#000;letter-spacing:-0.35px">0,00</div>
<div class="dot" style="left:1016px;top:235px;background:#808080"></div>
<div class="a" style="left:1022px;top:245px;width:2px;height:1px;background:#a4a4a4"></div>
<div class="dot" style="left:1066px;top:235px;background:#ffcc00"></div>
<div class="dot" style="left:1116px;top:235px;background:#808080"></div>
<div class="a" style="left:1122px;top:245px;width:2px;height:1px;background:#a4a4a4"></div>
<div class="dot" style="left:1166px;top:235px;background:#808080"></div>
<div class="a" style="left:1172px;top:245px;width:2px;height:1px;background:#a4a4a4"></div>
<div class="dot" style="left:1216px;top:235px;background:#808080"></div>
<div class="a" style="left:1222px;top:245px;width:2px;height:1px;background:#a4a4a4"></div>
<div class="dot" style="left:1266px;top:235px;background:#808080"></div>
<div class="a" style="left:1272px;top:245px;width:2px;height:1px;background:#a4a4a4"></div>
<div class="dot" style="left:1316px;top:235px;background:#808080"></div>
<div class="a" style="left:1322px;top:245px;width:2px;height:1px;background:#a4a4a4"></div>
<div class="t" style="left:1348px;width:65.00px;text-align:right;top:227px;color:#000;letter-spacing:0px">0</div>
<div class="t" style="left:37px;top:267px;color:#000;">Standard</div>
<div class="t" style="left:167px;top:267px;color:#000;">Support</div>
<div class="t" style="left:287px;top:267px;color:#000;">(keine</div>
<div class="t" style="left:287px;top:283px;color:#000;">Zuordnung)</div>
<div class="t" style="left:360px;width:65.55px;text-align:right;top:267px;color:#000;letter-spacing:-0.55px">13.07.201</div>
<div class="t" style="left:437px;top:267px;color:#000;">Schnellschmidt,</div>
<div class="t" style="left:437px;top:283px;color:#000;">Sabine</div>
<div class="t" style="left:557px;top:267px;color:#000;">Schnellschmidt,</div>
<div class="t" style="left:557px;top:283px;color:#000;">Sabine</div>
<div class="t" style="left:677px;top:267px;color:#000;">Standard</div>
<div class="t" style="left:790px;width:70.35px;text-align:right;top:267px;color:#000;letter-spacing:-0.35px">0,00</div>
<div class="t" style="left:864px;width:70.35px;text-align:right;top:267px;color:#000;letter-spacing:-0.35px">0,00</div>
<div class="dot" style="left:1016px;top:275px;background:#808080"></div>
<div class="a" style="left:1022px;top:285px;width:2px;height:1px;background:#a4a4a4"></div>
<div class="dot" style="left:1066px;top:275px;background:#ffcc00"></div>
<div class="dot" style="left:1116px;top:275px;background:#808080"></div>
<div class="a" style="left:1122px;top:285px;width:2px;height:1px;background:#a4a4a4"></div>
<div class="dot" style="left:1166px;top:275px;background:#808080"></div>
<div class="a" style="left:1172px;top:285px;width:2px;height:1px;background:#a4a4a4"></div>
<div class="dot" style="left:1216px;top:275px;background:#808080"></div>
<div class="a" style="left:1222px;top:285px;width:2px;height:1px;background:#a4a4a4"></div>
<div class="dot" style="left:1266px;top:275px;background:#808080"></div>
<div class="a" style="left:1272px;top:285px;width:2px;height:1px;background:#a4a4a4"></div>
<div class="dot" style="left:1316px;top:275px;background:#808080"></div>
<div class="a" style="left:1322px;top:285px;width:2px;height:1px;background:#a4a4a4"></div>
<div class="t" style="left:1348px;width:65.00px;text-align:right;top:267px;color:#000;letter-spacing:0px">0</div>
<div class="t" style="left:37px;top:307px;color:#000;">Standard</div>
<div class="t" style="left:167px;top:307px;color:#000;">Kopierer</div>
<div class="t" style="left:287px;top:307px;color:#000;">Service</div>
<div class="t" style="left:360px;width:65.55px;text-align:right;top:307px;color:#000;letter-spacing:-0.55px">24.05.201</div>
<div class="t" style="left:437px;top:307px;color:#000;">Schnellschmidt,</div>
<div class="t" style="left:437px;top:323px;color:#000;">Sabine</div>
<div class="t" style="left:557px;top:307px;color:#000;">Schnellschmidt,</div>
<div class="t" style="left:557px;top:323px;color:#000;">Sabine</div>
<div class="t" style="left:677px;top:307px;color:#000;">Schnellschmidt</div>
<div class="t" style="left:790px;width:70.35px;text-align:right;top:307px;color:#000;letter-spacing:-0.35px">115,50</div>
<div class="t" style="left:864px;width:70.35px;text-align:right;top:307px;color:#000;letter-spacing:-0.35px">115,50</div>
<div class="t" style="left:945px;top:307px;color:#000;letter-spacing:-0.25px">29.07.20</div>
<div class="t" style="left:945px;top:323px;color:#000;letter-spacing:-0.25px">19 08:00</div>
<div class="dot" style="left:1016px;top:315px;background:#808080"></div>
<div class="a" style="left:1022px;top:325px;width:2px;height:1px;background:#a4a4a4"></div>
<div class="dot" style="left:1066px;top:315px;background:#ffcc00"></div>
<div class="dot" style="left:1116px;top:315px;background:#808080"></div>
<div class="a" style="left:1122px;top:325px;width:2px;height:1px;background:#a4a4a4"></div>
<div class="dot" style="left:1166px;top:315px;background:#808080"></div>
<div class="a" style="left:1172px;top:325px;width:2px;height:1px;background:#a4a4a4"></div>
<div class="dot" style="left:1216px;top:315px;background:#808080"></div>
<div class="a" style="left:1222px;top:325px;width:2px;height:1px;background:#a4a4a4"></div>
<div class="dot" style="left:1266px;top:315px;background:#ff0000"></div>
<div class="dot" style="left:1316px;top:315px;background:#ff0000"></div>
<div class="t" style="left:1348px;width:65.00px;text-align:right;top:307px;color:#000;letter-spacing:0px">0</div>
<div class="t" style="left:37px;top:347px;color:#000;">Standard</div>
<div class="t" style="left:167px;top:347px;color:#000;">Support</div>
<div class="t" style="left:287px;top:347px;color:#000;">(keine</div>
<div class="t" style="left:287px;top:363px;color:#000;">Zuordnung)</div>
<div class="t" style="left:360px;width:65.55px;text-align:right;top:347px;color:#000;letter-spacing:-0.55px">24.05.201</div>
<div class="t" style="left:437px;top:347px;color:#000;">Schnellschmidt,</div>
<div class="t" style="left:437px;top:363px;color:#000;">Sabine</div>
<div class="t" style="left:557px;top:347px;color:#000;">Schnellschmidt,</div>
<div class="t" style="left:557px;top:363px;color:#000;">Sabine</div>
<div class="t" style="left:677px;top:347px;color:#000;">Schnellschmidt</div>
<div class="t" style="left:790px;width:70.35px;text-align:right;top:347px;color:#000;letter-spacing:-0.35px">0,00</div>
<div class="t" style="left:864px;width:70.35px;text-align:right;top:347px;color:#000;letter-spacing:-0.35px">0,00</div>
<div class="t" style="left:945px;top:347px;color:#000;letter-spacing:-0.25px">26.07.20</div>
<div class="t" style="left:945px;top:363px;color:#000;letter-spacing:-0.25px">19 09:02</div>
<div class="dot" style="left:1016px;top:355px;background:#808080"></div>
<div class="a" style="left:1022px;top:365px;width:2px;height:1px;background:#a4a4a4"></div>
<div class="dot" style="left:1066px;top:355px;background:#ffcc00"></div>
<div class="dot" style="left:1116px;top:355px;background:#808080"></div>
<div class="a" style="left:1122px;top:365px;width:2px;height:1px;background:#a4a4a4"></div>
<div class="dot" style="left:1166px;top:355px;background:#808080"></div>
<div class="a" style="left:1172px;top:365px;width:2px;height:1px;background:#a4a4a4"></div>
<div class="dot" style="left:1216px;top:355px;background:#009900"></div>
<div class="dot" style="left:1266px;top:355px;background:#ff0000"></div>
<div class="dot" style="left:1316px;top:355px;background:#808080"></div>
<div class="a" style="left:1322px;top:365px;width:2px;height:1px;background:#a4a4a4"></div>
<div class="t" style="left:1348px;width:65.00px;text-align:right;top:347px;color:#000;letter-spacing:0px">0</div>
<div class="t" style="left:37px;top:387px;color:#000;">Standard</div>
<div class="t" style="left:167px;top:387px;color:#000;">Bürobedarf</div>
<div class="t" style="left:287px;top:387px;color:#000;">(keine</div>
<div class="t" style="left:287px;top:403px;color:#000;">Zuordnung)</div>
<div class="t" style="left:360px;width:65.55px;text-align:right;top:387px;color:#000;letter-spacing:-0.55px">01.07.201</div>
<div class="t" style="left:437px;top:387px;color:#000;">Schnellschmidt,</div>
<div class="t" style="left:437px;top:403px;color:#000;">Sabine</div>
<div class="t" style="left:557px;top:387px;color:#000;">Schnellschmidt,</div>
<div class="t" style="left:557px;top:403px;color:#000;">Sabine</div>
<div class="t" style="left:677px;top:387px;color:#000;">Schnellschmidt</div>
<div class="t" style="left:790px;width:70.35px;text-align:right;top:387px;color:#000;letter-spacing:-0.35px">91,38</div>
<div class="t" style="left:864px;width:70.35px;text-align:right;top:387px;color:#000;letter-spacing:-0.35px">91,38</div>
<div class="t" style="left:945px;top:387px;color:#000;letter-spacing:-0.25px">01.07.20</div>
<div class="t" style="left:945px;top:403px;color:#000;letter-spacing:-0.25px">19 11:00</div>
<div class="dot" style="left:1016px;top:395px;background:#808080"></div>
<div class="a" style="left:1022px;top:405px;width:2px;height:1px;background:#a4a4a4"></div>
<div class="dot" style="left:1066px;top:395px;background:#ffcc00"></div>
<div class="dot" style="left:1116px;top:395px;background:#808080"></div>
<div class="a" style="left:1122px;top:405px;width:2px;height:1px;background:#a4a4a4"></div>
<div class="dot" style="left:1166px;top:395px;background:#808080"></div>
<div class="a" style="left:1172px;top:405px;width:2px;height:1px;background:#a4a4a4"></div>
<div class="dot" style="left:1216px;top:395px;background:#009900"></div>
<div class="dot" style="left:1266px;top:395px;background:#ff0000"></div>
<div class="dot" style="left:1316px;top:395px;background:#808080"></div>
<div class="a" style="left:1322px;top:405px;width:2px;height:1px;background:#a4a4a4"></div>
<div class="t" style="left:1348px;width:65.00px;text-align:right;top:387px;color:#000;letter-spacing:0px">0</div>
<div class="t" style="left:37px;top:427px;color:#000;">Standard</div>
<div class="t" style="left:167px;top:427px;color:#000;">Bürobedarf</div>
<div class="t" style="left:287px;top:427px;color:#000;">(keine</div>
<div class="t" style="left:287px;top:443px;color:#000;">Zuordnung)</div>
<div class="t" style="left:360px;width:65.55px;text-align:right;top:427px;color:#000;letter-spacing:-0.55px">02.07.201</div>
<div class="t" style="left:437px;top:427px;color:#000;">Schnellschmidt,</div>
<div class="t" style="left:437px;top:443px;color:#000;">Sabine</div>
<div class="t" style="left:557px;top:427px;color:#000;">Schnellschmidt,</div>
<div class="t" style="left:557px;top:443px;color:#000;">Sabine</div>
<div class="t" style="left:677px;top:427px;color:#000;">Schnellschmidt</div>
<div class="t" style="left:790px;width:70.35px;text-align:right;top:427px;color:#000;letter-spacing:-0.35px">59,22</div>
<div class="t" style="left:864px;width:70.35px;text-align:right;top:427px;color:#000;letter-spacing:-0.35px">59,22</div>
<div class="t" style="left:945px;top:427px;color:#000;letter-spacing:-0.25px">02.07.20</div>
<div class="t" style="left:945px;top:443px;color:#000;letter-spacing:-0.25px">19 08:00</div>
<div class="dot" style="left:1016px;top:435px;background:#808080"></div>
<div class="a" style="left:1022px;top:445px;width:2px;height:1px;background:#a4a4a4"></div>
<div class="dot" style="left:1066px;top:435px;background:#ffcc00"></div>
<div class="dot" style="left:1116px;top:435px;background:#808080"></div>
<div class="a" style="left:1122px;top:445px;width:2px;height:1px;background:#a4a4a4"></div>
<div class="dot" style="left:1166px;top:435px;background:#808080"></div>
<div class="a" style="left:1172px;top:445px;width:2px;height:1px;background:#a4a4a4"></div>
<div class="dot" style="left:1216px;top:435px;background:#009900"></div>
<div class="dot" style="left:1266px;top:435px;background:#ff0000"></div>
<div class="dot" style="left:1316px;top:435px;background:#808080"></div>
<div class="a" style="left:1322px;top:445px;width:2px;height:1px;background:#a4a4a4"></div>
<div class="t" style="left:1348px;width:65.00px;text-align:right;top:427px;color:#000;letter-spacing:0px">0</div>
<div class="t" style="left:37px;top:467px;color:#000;">Standard</div>
<div class="t" style="left:167px;top:467px;color:#000;">Edischnittstelle</div>
<div class="t" style="left:287px;top:467px;color:#000;">(keine</div>
<div class="t" style="left:287px;top:483px;color:#000;">Zuordnung)</div>
<div class="t" style="left:360px;width:65.55px;text-align:right;top:467px;color:#000;letter-spacing:-0.55px">02.07.201</div>
<div class="t" style="left:437px;top:467px;color:#000;">Schnellschmidt,</div>
<div class="t" style="left:437px;top:483px;color:#000;">Sabine</div>
<div class="t" style="left:557px;top:467px;color:#000;">Schnellschmidt,</div>
<div class="t" style="left:557px;top:483px;color:#000;">Sabine</div>
<div class="t" style="left:677px;top:467px;color:#000;">Schnellschmidt</div>
<div class="t" style="left:790px;width:70.35px;text-align:right;top:467px;color:#000;letter-spacing:-0.35px">9,22</div>
<div class="t" style="left:864px;width:70.35px;text-align:right;top:467px;color:#000;letter-spacing:-0.35px">9,22</div>
<div class="t" style="left:945px;top:467px;color:#000;letter-spacing:-0.25px">03.07.20</div>
<div class="t" style="left:945px;top:483px;color:#000;letter-spacing:-0.25px">19 10:00</div>
<div class="dot" style="left:1016px;top:475px;background:#808080"></div>
<div class="a" style="left:1022px;top:485px;width:2px;height:1px;background:#a4a4a4"></div>
<div class="dot" style="left:1066px;top:475px;background:#ffcc00"></div>
<div class="dot" style="left:1116px;top:475px;background:#808080"></div>
<div class="a" style="left:1122px;top:485px;width:2px;height:1px;background:#a4a4a4"></div>
<div class="dot" style="left:1166px;top:475px;background:#808080"></div>
<div class="a" style="left:1172px;top:485px;width:2px;height:1px;background:#a4a4a4"></div>
<div class="dot" style="left:1216px;top:475px;background:#009900"></div>
<div class="dot" style="left:1266px;top:475px;background:#ff0000"></div>
<div class="dot" style="left:1316px;top:475px;background:#808080"></div>
<div class="a" style="left:1322px;top:485px;width:2px;height:1px;background:#a4a4a4"></div>
<div class="t" style="left:1348px;width:65.00px;text-align:right;top:467px;color:#000;letter-spacing:0px">0</div>
<div class="t" style="left:37px;top:507px;color:#000;">Standard</div>
<div class="t" style="left:167px;top:507px;color:#000;">Edischnittstelle</div>
<div class="t" style="left:287px;top:507px;color:#000;">(keine</div>
<div class="t" style="left:287px;top:523px;color:#000;">Zuordnung)</div>
<div class="t" style="left:360px;width:65.55px;text-align:right;top:507px;color:#000;letter-spacing:-0.55px">04.07.201</div>
<div class="t" style="left:437px;top:507px;color:#000;">Schnellschmidt,</div>
<div class="t" style="left:437px;top:523px;color:#000;">Sabine</div>
<div class="t" style="left:557px;top:507px;color:#000;">Schnellschmidt,</div>
<div class="t" style="left:557px;top:523px;color:#000;">Sabine</div>
<div class="t" style="left:677px;top:507px;color:#000;">Schnellschmidt</div>
<div class="t" style="left:790px;width:70.35px;text-align:right;top:507px;color:#000;letter-spacing:-0.35px">193,33</div>
<div class="t" style="left:864px;width:70.35px;text-align:right;top:507px;color:#000;letter-spacing:-0.35px">193,33</div>
<div class="t" style="left:945px;top:507px;color:#000;letter-spacing:-0.25px">04.07.20</div>
<div class="t" style="left:945px;top:523px;color:#000;letter-spacing:-0.25px">19 09:00</div>
<div class="dot" style="left:1016px;top:515px;background:#808080"></div>
<div class="a" style="left:1022px;top:525px;width:2px;height:1px;background:#a4a4a4"></div>
<div class="dot" style="left:1066px;top:515px;background:#ffcc00"></div>
<div class="dot" style="left:1116px;top:515px;background:#808080"></div>
<div class="a" style="left:1122px;top:525px;width:2px;height:1px;background:#a4a4a4"></div>
<div class="dot" style="left:1166px;top:515px;background:#808080"></div>
<div class="a" style="left:1172px;top:525px;width:2px;height:1px;background:#a4a4a4"></div>
<div class="dot" style="left:1216px;top:515px;background:#009900"></div>
<div class="dot" style="left:1266px;top:515px;background:#ff0000"></div>
<div class="dot" style="left:1316px;top:515px;background:#808080"></div>
<div class="a" style="left:1322px;top:525px;width:2px;height:1px;background:#a4a4a4"></div>
<div class="t" style="left:1348px;width:65.00px;text-align:right;top:507px;color:#000;letter-spacing:0px">0</div>
<div class="t" style="left:37px;top:547px;color:#000;">Standard</div>
<div class="t" style="left:167px;top:547px;color:#000;">Bürobedarf</div>
<div class="t" style="left:287px;top:547px;color:#000;">(keine</div>
<div class="t" style="left:287px;top:563px;color:#000;">Zuordnung)</div>
<div class="t" style="left:360px;width:65.55px;text-align:right;top:547px;color:#000;letter-spacing:-0.55px">05.07.201</div>
<div class="t" style="left:437px;top:547px;color:#000;">Schnellschmidt,</div>
<div class="t" style="left:437px;top:563px;color:#000;">Sabine</div>
<div class="t" style="left:557px;top:547px;color:#000;">Schnellschmidt,</div>
<div class="t" style="left:557px;top:563px;color:#000;">Sabine</div>
<div class="t" style="left:677px;top:547px;color:#000;">Schnellschmidt</div>
<div class="t" style="left:790px;width:70.35px;text-align:right;top:547px;color:#000;letter-spacing:-0.35px">13,88</div>
<div class="t" style="left:864px;width:70.35px;text-align:right;top:547px;color:#000;letter-spacing:-0.35px">13,88</div>
<div class="t" style="left:945px;top:547px;color:#000;letter-spacing:-0.25px">05.07.20</div>
<div class="t" style="left:945px;top:563px;color:#000;letter-spacing:-0.25px">19 09:50</div>
<div class="dot" style="left:1016px;top:555px;background:#808080"></div>
<div class="a" style="left:1022px;top:565px;width:2px;height:1px;background:#a4a4a4"></div>
<div class="dot" style="left:1066px;top:555px;background:#ffcc00"></div>
<div class="dot" style="left:1116px;top:555px;background:#808080"></div>
<div class="a" style="left:1122px;top:565px;width:2px;height:1px;background:#a4a4a4"></div>
<div class="dot" style="left:1166px;top:555px;background:#808080"></div>
<div class="a" style="left:1172px;top:565px;width:2px;height:1px;background:#a4a4a4"></div>
<div class="dot" style="left:1216px;top:555px;background:#009900"></div>
<div class="dot" style="left:1266px;top:555px;background:#ff0000"></div>
<div class="dot" style="left:1316px;top:555px;background:#808080"></div>
<div class="a" style="left:1322px;top:565px;width:2px;height:1px;background:#a4a4a4"></div>
<div class="t" style="left:1348px;width:65.00px;text-align:right;top:547px;color:#000;letter-spacing:0px">0</div>
<div class="t" style="left:37px;top:587px;color:#000;">Standard</div>
<div class="t" style="left:167px;top:587px;color:#000;">Bürobedarf</div>
<div class="t" style="left:287px;top:587px;color:#000;">(keine</div>
<div class="t" style="left:287px;top:603px;color:#000;">Zuordnung)</div>
<div class="t" style="left:360px;width:65.55px;text-align:right;top:587px;color:#000;letter-spacing:-0.55px">08.07.201</div>
<div class="t" style="left:437px;top:587px;color:#000;">Schnellschmidt,</div>
<div class="t" style="left:437px;top:603px;color:#000;">Sabine</div>
<div class="t" style="left:557px;top:587px;color:#000;">Schnellschmidt,</div>
<div class="t" style="left:557px;top:603px;color:#000;">Sabine</div>
<div class="t" style="left:677px;top:587px;color:#000;">Schnellschmidt</div>
<div class="t" style="left:790px;width:70.35px;text-align:right;top:587px;color:#000;letter-spacing:-0.35px">307,50</div>
<div class="t" style="left:864px;width:70.35px;text-align:right;top:587px;color:#000;letter-spacing:-0.35px">307,50</div>
<div class="t" style="left:945px;top:587px;color:#000;letter-spacing:-0.25px">08.07.20</div>
<div class="t" style="left:945px;top:603px;color:#000;letter-spacing:-0.25px">19 15:00</div>
<div class="dot" style="left:1016px;top:595px;background:#808080"></div>
<div class="a" style="left:1022px;top:605px;width:2px;height:1px;background:#a4a4a4"></div>
<div class="dot" style="left:1066px;top:595px;background:#ffcc00"></div>
<div class="dot" style="left:1116px;top:595px;background:#808080"></div>
<div class="a" style="left:1122px;top:605px;width:2px;height:1px;background:#a4a4a4"></div>
<div class="dot" style="left:1166px;top:595px;background:#808080"></div>
<div class="a" style="left:1172px;top:605px;width:2px;height:1px;background:#a4a4a4"></div>
<div class="dot" style="left:1216px;top:595px;background:#009900"></div>
<div class="dot" style="left:1266px;top:595px;background:#ff0000"></div>
<div class="dot" style="left:1316px;top:595px;background:#808080"></div>
<div class="a" style="left:1322px;top:605px;width:2px;height:1px;background:#a4a4a4"></div>
<div class="t" style="left:1348px;width:65.00px;text-align:right;top:587px;color:#000;letter-spacing:0px">0</div>
<div class="t" style="left:37px;top:627px;color:#000;">Standard</div>
<div class="t" style="left:167px;top:627px;color:#000;">Bürobedarf</div>
<div class="t" style="left:287px;top:627px;color:#000;">(keine</div>
<div class="t" style="left:287px;top:643px;color:#000;">Zuordnung)</div>
<div class="t" style="left:360px;width:65.55px;text-align:right;top:627px;color:#000;letter-spacing:-0.55px">08.07.201</div>
<div class="t" style="left:437px;top:627px;color:#000;">Schnellschmidt,</div>
<div class="t" style="left:437px;top:643px;color:#000;">Sabine</div>
<div class="t" style="left:557px;top:627px;color:#000;">Schnellschmidt,</div>
<div class="t" style="left:557px;top:643px;color:#000;">Sabine</div>
<div class="t" style="left:677px;top:627px;color:#000;">Schnellschmidt</div>
<div class="t" style="left:790px;width:70.35px;text-align:right;top:627px;color:#000;letter-spacing:-0.35px">106,38</div>
<div class="t" style="left:864px;width:70.35px;text-align:right;top:627px;color:#000;letter-spacing:-0.35px">106,38</div>
<div class="t" style="left:945px;top:627px;color:#000;letter-spacing:-0.25px">08.07.20</div>
<div class="t" style="left:945px;top:643px;color:#000;letter-spacing:-0.25px">19 15:00</div>
<div class="dot" style="left:1016px;top:635px;background:#808080"></div>
<div class="a" style="left:1022px;top:645px;width:2px;height:1px;background:#a4a4a4"></div>
<div class="dot" style="left:1066px;top:635px;background:#ffcc00"></div>
<div class="dot" style="left:1116px;top:635px;background:#808080"></div>
<div class="a" style="left:1122px;top:645px;width:2px;height:1px;background:#a4a4a4"></div>
<div class="dot" style="left:1166px;top:635px;background:#808080"></div>
<div class="a" style="left:1172px;top:645px;width:2px;height:1px;background:#a4a4a4"></div>
<div class="dot" style="left:1216px;top:635px;background:#009900"></div>
<div class="dot" style="left:1266px;top:635px;background:#ff0000"></div>
<div class="dot" style="left:1316px;top:635px;background:#808080"></div>
<div class="a" style="left:1322px;top:645px;width:2px;height:1px;background:#a4a4a4"></div>
<div class="t" style="left:1348px;width:65.00px;text-align:right;top:627px;color:#000;letter-spacing:0px">0</div>
<div class="t" style="left:37px;top:667px;color:#000;">Standard</div>
<div class="t" style="left:167px;top:667px;color:#000;">Bürobedarf</div>
<div class="t" style="left:287px;top:667px;color:#000;">(keine</div>
<div class="t" style="left:287px;top:683px;color:#000;">Zuordnung)</div>
<div class="t" style="left:360px;width:65.55px;text-align:right;top:667px;color:#000;letter-spacing:-0.55px">09.07.201</div>
<div class="t" style="left:437px;top:667px;color:#000;">Schnellschmidt,</div>
<div class="t" style="left:437px;top:683px;color:#000;">Sabine</div>
<div class="t" style="left:557px;top:667px;color:#000;">Schnellschmidt,</div>
<div class="t" style="left:557px;top:683px;color:#000;">Sabine</div>
<div class="t" style="left:677px;top:667px;color:#000;">Schnellschmidt</div>
<div class="t" style="left:790px;width:70.35px;text-align:right;top:667px;color:#000;letter-spacing:-0.35px">94,14</div>
<div class="t" style="left:864px;width:70.35px;text-align:right;top:667px;color:#000;letter-spacing:-0.35px">94,14</div>
<div class="t" style="left:945px;top:667px;color:#000;letter-spacing:-0.25px">09.07.20</div>
<div class="t" style="left:945px;top:683px;color:#000;letter-spacing:-0.25px">19 08:00</div>
<div class="dot" style="left:1016px;top:675px;background:#808080"></div>
<div class="a" style="left:1022px;top:685px;width:2px;height:1px;background:#a4a4a4"></div>
<div class="dot" style="left:1066px;top:675px;background:#ffcc00"></div>
<div class="dot" style="left:1116px;top:675px;background:#808080"></div>
<div class="a" style="left:1122px;top:685px;width:2px;height:1px;background:#a4a4a4"></div>
<div class="dot" style="left:1166px;top:675px;background:#808080"></div>
<div class="a" style="left:1172px;top:685px;width:2px;height:1px;background:#a4a4a4"></div>
<div class="dot" style="left:1216px;top:675px;background:#009900"></div>
<div class="dot" style="left:1266px;top:675px;background:#ff0000"></div>
<div class="dot" style="left:1316px;top:675px;background:#808080"></div>
<div class="a" style="left:1322px;top:685px;width:2px;height:1px;background:#a4a4a4"></div>
<div class="t" style="left:1348px;width:65.00px;text-align:right;top:667px;color:#000;letter-spacing:0px">0</div>
<div class="t" style="left:37px;top:707px;color:#000;">Standard</div>
<div class="t" style="left:167px;top:707px;color:#000;">Bürobedarf</div>
<div class="t" style="left:287px;top:707px;color:#000;">(keine</div>
<div class="t" style="left:287px;top:723px;color:#000;">Zuordnung)</div>
<div class="t" style="left:360px;width:65.55px;text-align:right;top:707px;color:#000;letter-spacing:-0.55px">09.07.201</div>
<div class="t" style="left:437px;top:707px;color:#000;">Schnellschmidt,</div>
<div class="t" style="left:437px;top:723px;color:#000;">Sabine</div>
<div class="t" style="left:557px;top:707px;color:#000;">Schnellschmidt,</div>
<div class="t" style="left:557px;top:723px;color:#000;">Sabine</div>
<div class="t" style="left:677px;top:707px;color:#000;">Schnellschmidt</div>
<div class="t" style="left:790px;width:70.35px;text-align:right;top:707px;color:#000;letter-spacing:-0.35px">877,10</div>
<div class="t" style="left:864px;width:70.35px;text-align:right;top:707px;color:#000;letter-spacing:-0.35px">877,10</div>
<div class="t" style="left:945px;top:707px;color:#000;letter-spacing:-0.25px">10.07.20</div>
<div class="t" style="left:945px;top:723px;color:#000;letter-spacing:-0.25px">19 01:20</div>
<div class="dot" style="left:1016px;top:715px;background:#808080"></div>
<div class="a" style="left:1022px;top:725px;width:2px;height:1px;background:#a4a4a4"></div>
<div class="dot" style="left:1066px;top:715px;background:#ffcc00"></div>
<div class="dot" style="left:1116px;top:715px;background:#808080"></div>
<div class="a" style="left:1122px;top:725px;width:2px;height:1px;background:#a4a4a4"></div>
<div class="dot" style="left:1166px;top:715px;background:#808080"></div>
<div class="a" style="left:1172px;top:725px;width:2px;height:1px;background:#a4a4a4"></div>
<div class="dot" style="left:1216px;top:715px;background:#009900"></div>
<div class="dot" style="left:1266px;top:715px;background:#ff0000"></div>
<div class="dot" style="left:1316px;top:715px;background:#808080"></div>
<div class="a" style="left:1322px;top:725px;width:2px;height:1px;background:#a4a4a4"></div>
<div class="t" style="left:1348px;width:65.00px;text-align:right;top:707px;color:#000;letter-spacing:0px">0</div>
<div class="a" style="left:1532px;top:163px;width:17px;height:584px;background:#f8f8f8"></div>
<div class="sbtn" style="left:1532px;top:163px;width:17px;height:17px"></div>
<div class="a" style="left:1537px;top:173px;width:7px;height:1px;background:#606060"></div><div class="a" style="left:1538px;top:172px;width:5px;height:1px;background:#606060"></div><div class="a" style="left:1539px;top:171px;width:3px;height:1px;background:#606060"></div><div class="a" style="left:1540px;top:170px;width:1px;height:1px;background:#606060"></div>
<div class="a" style="left:1532px;top:179px;width:17px;height:127px;border:1px solid #a6a6a6;border-top-width:2px;background:#fff"></div>
<div class="sbtn" style="left:1532px;top:730px;width:17px;height:17px"></div>
<div class="a" style="left:1537px;top:737px;width:7px;height:1px;background:#606060"></div><div class="a" style="left:1538px;top:738px;width:5px;height:1px;background:#606060"></div><div class="a" style="left:1539px;top:739px;width:3px;height:1px;background:#606060"></div><div class="a" style="left:1540px;top:740px;width:1px;height:1px;background:#606060"></div>
<div class="a" style="left:5px;top:747px;width:1527px;height:17px;background:#f8f8f8"></div>
<div class="sbtn" style="left:5px;top:747px;width:17px;height:17px"></div>
<div class="a" style="left:14px;top:752px;width:1px;height:7px;background:#606060"></div><div class="a" style="left:13px;top:753px;width:1px;height:5px;background:#606060"></div><div class="a" style="left:12px;top:754px;width:1px;height:3px;background:#606060"></div><div class="a" style="left:11px;top:755px;width:1px;height:1px;background:#606060"></div>
<div class="a" style="left:220px;top:747px;width:939px;height:17px;border:1px solid #a6a6a6;background:#fff"></div>
<div class="sbtn" style="left:1515px;top:747px;width:17px;height:17px"></div>
<div class="a" style="left:1522px;top:752px;width:1px;height:7px;background:#606060"></div><div class="a" style="left:1523px;top:753px;width:1px;height:5px;background:#606060"></div><div class="a" style="left:1524px;top:754px;width:1px;height:3px;background:#606060"></div><div class="a" style="left:1525px;top:755px;width:1px;height:1px;background:#606060"></div>
<div class="a" style="left:1532px;top:747px;width:17px;height:17px;background:#efefef"></div>
<div class="a" style="left:4px;top:162px;width:1546px;height:603px;border:1px solid #bccbdd"></div>
</body></html>
